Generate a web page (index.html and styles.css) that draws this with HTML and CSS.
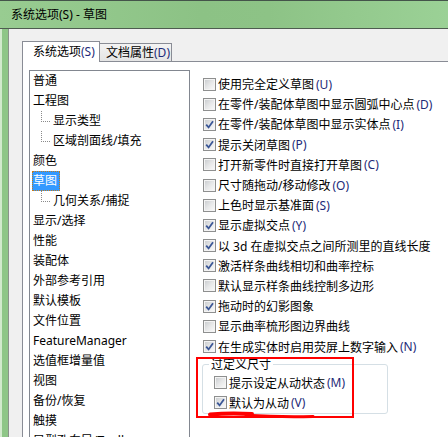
FILE: index.html
```html
<!DOCTYPE html>
<html lang="zh-CN">
<head>
  <meta charset="UTF-8">
  <title>系统选项(S) - 草图</title>
  <link rel="stylesheet" href="styles.css">
</head>
<body>
  <div class="titlebar">系统选项(S) - 草图</div>
  <div class="window">
    <div class="edge"></div>
    <div class="client">
      <div class="tabs">
        <div class="tab active">系统选项<span class="key">(S)</span></div>
        <div class="tab">文档属性<span class="key">(D)</span></div>
      </div>
      <div class="panel">
        <ul class="listbox">
          <li><span>普通</span></li>
          <li><span>工程图</span></li>
          <li class="child"><span>显示类型</span></li>
          <li class="child"><span>区域剖面线/填充</span></li>
          <li><span>颜色</span></li>
          <li><span class="selected">草图</span></li>
          <li class="child"><span>几何关系/捕捉</span></li>
          <li><span>显示/选择</span></li>
          <li><span>性能</span></li>
          <li><span>装配体</span></li>
          <li><span>外部参考引用</span></li>
          <li><span>默认模板</span></li>
          <li><span>文件位置</span></li>
          <li><span>FeatureManager</span></li>
          <li><span>选值框增量值</span></li>
          <li><span>视图</span></li>
          <li><span>备份/恢复</span></li>
          <li><span>触摸</span></li>
          <li><span>异型孔向导/Toolbox</span></li>
        </ul>

        <div class="options">
          <div class="opt"><span class="cb"></span>使用完全定义草图<span class="key">(U)</span></div>
          <div class="opt"><span class="cb"></span>在零件/装配体草图中显示圆弧中心点<span class="key">(D)</span></div>
          <div class="opt"><span class="cb"><svg viewBox="0 0 11 11"><path d="M2.2 5.6 L4.6 8.4 L9 2.2"/></svg></span>在零件/装配体草图中显示实体点<span class="key">(I)</span></div>
          <div class="opt"><span class="cb"><svg viewBox="0 0 11 11"><path d="M2.2 5.6 L4.6 8.4 L9 2.2"/></svg></span>提示关闭草图<span class="key">(P)</span></div>
          <div class="opt"><span class="cb"></span>打开新零件时直接打开草图<span class="key">(C)</span></div>
          <div class="opt"><span class="cb"></span>尺寸随拖动/移动修改<span class="key">(O)</span></div>
          <div class="opt"><span class="cb"></span>上色时显示基准面<span class="key">(S)</span></div>
          <div class="opt"><span class="cb"><svg viewBox="0 0 11 11"><path d="M2.2 5.6 L4.6 8.4 L9 2.2"/></svg></span>显示虚拟交点<span class="key">(Y)</span></div>
          <div class="opt"><span class="cb"><svg viewBox="0 0 11 11"><path d="M2.2 5.6 L4.6 8.4 L9 2.2"/></svg></span>以 3d 在虚拟交点之间所测里的直线长度</div>
          <div class="opt"><span class="cb"><svg viewBox="0 0 11 11"><path d="M2.2 5.6 L4.6 8.4 L9 2.2"/></svg></span>激活样条曲线相切和曲率控标</div>
          <div class="opt"><span class="cb"></span>默认显示样条曲线控制多边形</div>
          <div class="opt"><span class="cb"><svg viewBox="0 0 11 11"><path d="M2.2 5.6 L4.6 8.4 L9 2.2"/></svg></span>拖动时的幻影图象</div>
          <div class="opt"><span class="cb"></span>显示曲率梳形图边界曲线</div>
          <div class="opt"><span class="cb"><svg viewBox="0 0 11 11"><path d="M2.2 5.6 L4.6 8.4 L9 2.2"/></svg></span>在生成实体时启用荧屏上数字输入<span class="key">(N)</span></div>

          <fieldset class="group">
            <legend>过定义尺寸</legend>
            <div class="opt"><span class="cb"></span>提示设定从动状态<span class="key">(M)</span></div>
            <div class="opt"><span class="cb"><svg viewBox="0 0 11 11"><path d="M2.2 5.6 L4.6 8.4 L9 2.2"/></svg></span>默认为从动<span class="key">(V)</span></div>
          </fieldset>
        </div>
      </div>
    </div>
  </div>

  <!-- red markup drawn over the dialog -->
  <div class="mark-box"></div>
  <svg class="mark-line" viewBox="0 0 112 12">
    <path d="M4 5.5 Q 24 3.6 46 5" stroke-width="4"/>
    <path d="M40 6.2 Q 74 8.2 107 7.4" stroke-width="3"/>
  </svg>
</body>
</html>
```

FILE: styles.css
```css
body {
  margin: 0;
  width: 448px;
  height: 437px;
  overflow: hidden;
  display: flex;
  flex-direction: column;
  background: #f0f0f0;
  font-family: "Noto Sans", "Noto Sans CJK SC", sans-serif;
  font-size: 12px;
  color: #000;
  position: relative;
}
.titlebar {
  height: 27px;
  line-height: 27px;
  padding-left: 11px;
  border-top: 1px solid #44544a;
  border-bottom: 1px solid #4e5c50;
  background: linear-gradient(to right, #98cc91, #8cc285 45%, #8dc386 60%, #9bd196);
  white-space: nowrap;
}
.window {
  flex: 1;
  display: flex;
  min-height: 0;
}
.edge {
  width: 8px;
  background: linear-gradient(to right, #d2eacd 0, #d2eacd 2px, #8ec687 2px);
}
.client {
  flex: 1;
  display: flex;
  flex-direction: column;
  min-width: 0;
  padding: 12px 0 0 13px;
  border-left: 1px solid #8a938a;
  background: #f0f0f0;
}
.key {
  color: #1d2a78;
}

/* tabs */
.tabs {
  display: flex;
  align-items: flex-end;
  height: 20px;
}
.tab {
  box-sizing: border-box;
  height: 18px;
  width: 73px;
  margin-left: -1px;
  padding-left: 6px;
  line-height: 17px;
  border: 1px solid #898c95;
  border-bottom: none;
  background: linear-gradient(#f3f3f3, #e4e4e4);
  white-space: nowrap;
}
.tab.active {
  position: relative;
  z-index: 1;
  height: 21px;
  width: 78px;
  margin: 0 0 -1px 0;
  padding-left: 10px;
  line-height: 20px;
  background: #fff;
}

/* page */
.panel {
  flex: 1;
  display: flex;
  align-items: flex-start;
  min-height: 0;
  overflow: hidden;
  background: #fff;
  border-top: 1px solid #898c95;
  border-left: 1px solid #898c95;
}
.listbox {
  list-style: none;
  margin: 8px 0 0 6px;
  padding: 0;
  width: 161px;
  height: 420px;
  box-sizing: border-box;
  border: 1px solid #828790;
  flex-shrink: 0;
}
.listbox li {
  position: relative;
  height: 20px;
  padding-left: 2px;
  white-space: nowrap;
}
.listbox li span {
  display: inline-block;
  box-sizing: border-box;
  height: 20px;
  line-height: 18px;
  padding-right: 2px;
  border: 1px solid transparent;
}
.listbox li span.selected {
  background: #3399ff;
  color: #fff;
  border: 1px dotted #c27a1c;
}
.listbox li.child {
  padding-left: 22px;
}
.listbox li.child::before {
  content: "";
  position: absolute;
  left: 11px;
  top: 0;
  width: 8px;
  height: 10px;
  border-left: 1px dotted #8a8a8a;
  border-bottom: 1px dotted #8a8a8a;
}

/* options column */
.options {
  margin-left: 13px;
  padding-top: 12px;
  white-space: nowrap;
}
.opt {
  display: flex;
  align-items: center;
  gap: 2px;
  height: 20.2px;
}
.cb {
  flex-shrink: 0;
  box-sizing: border-box;
  width: 13px;
  height: 13px;
  border: 1px solid #8e8f8f;
  background: linear-gradient(135deg, #c6c9cc 0%, #e6e7e8 50%, #fbfbfb 100%);
  box-shadow: inset 0 0 0 1px #f4f4f4;
}
.cb svg {
  display: block;
  width: 11px;
  height: 11px;
}
.cb path {
  fill: none;
  stroke: #3a5696;
  stroke-width: 1.8;
}

/* group box */
.group {
  box-sizing: border-box;
  width: 186px;
  margin: 0 0 0 -1px;
  padding: 0 0 0 6px;
  border: 1px solid #d5dfe5;
  border-radius: 3px;
}
.group legend {
  padding: 0 2px;
  line-height: 16px;
}
.group .opt {
  height: 20px;
  padding-left: 5px;
}

/* red markup */
.mark-box {
  position: absolute;
  left: 196px;
  top: 357px;
  width: 158px;
  height: 61px;
  box-sizing: border-box;
  border: 2px solid #ff0000;
}
.mark-line {
  position: absolute;
  left: 206px;
  top: 409px;
  width: 112px;
  height: 12px;
}
.mark-line path {
  fill: none;
  stroke: #ff0000;
  stroke-linecap: round;
}
```
